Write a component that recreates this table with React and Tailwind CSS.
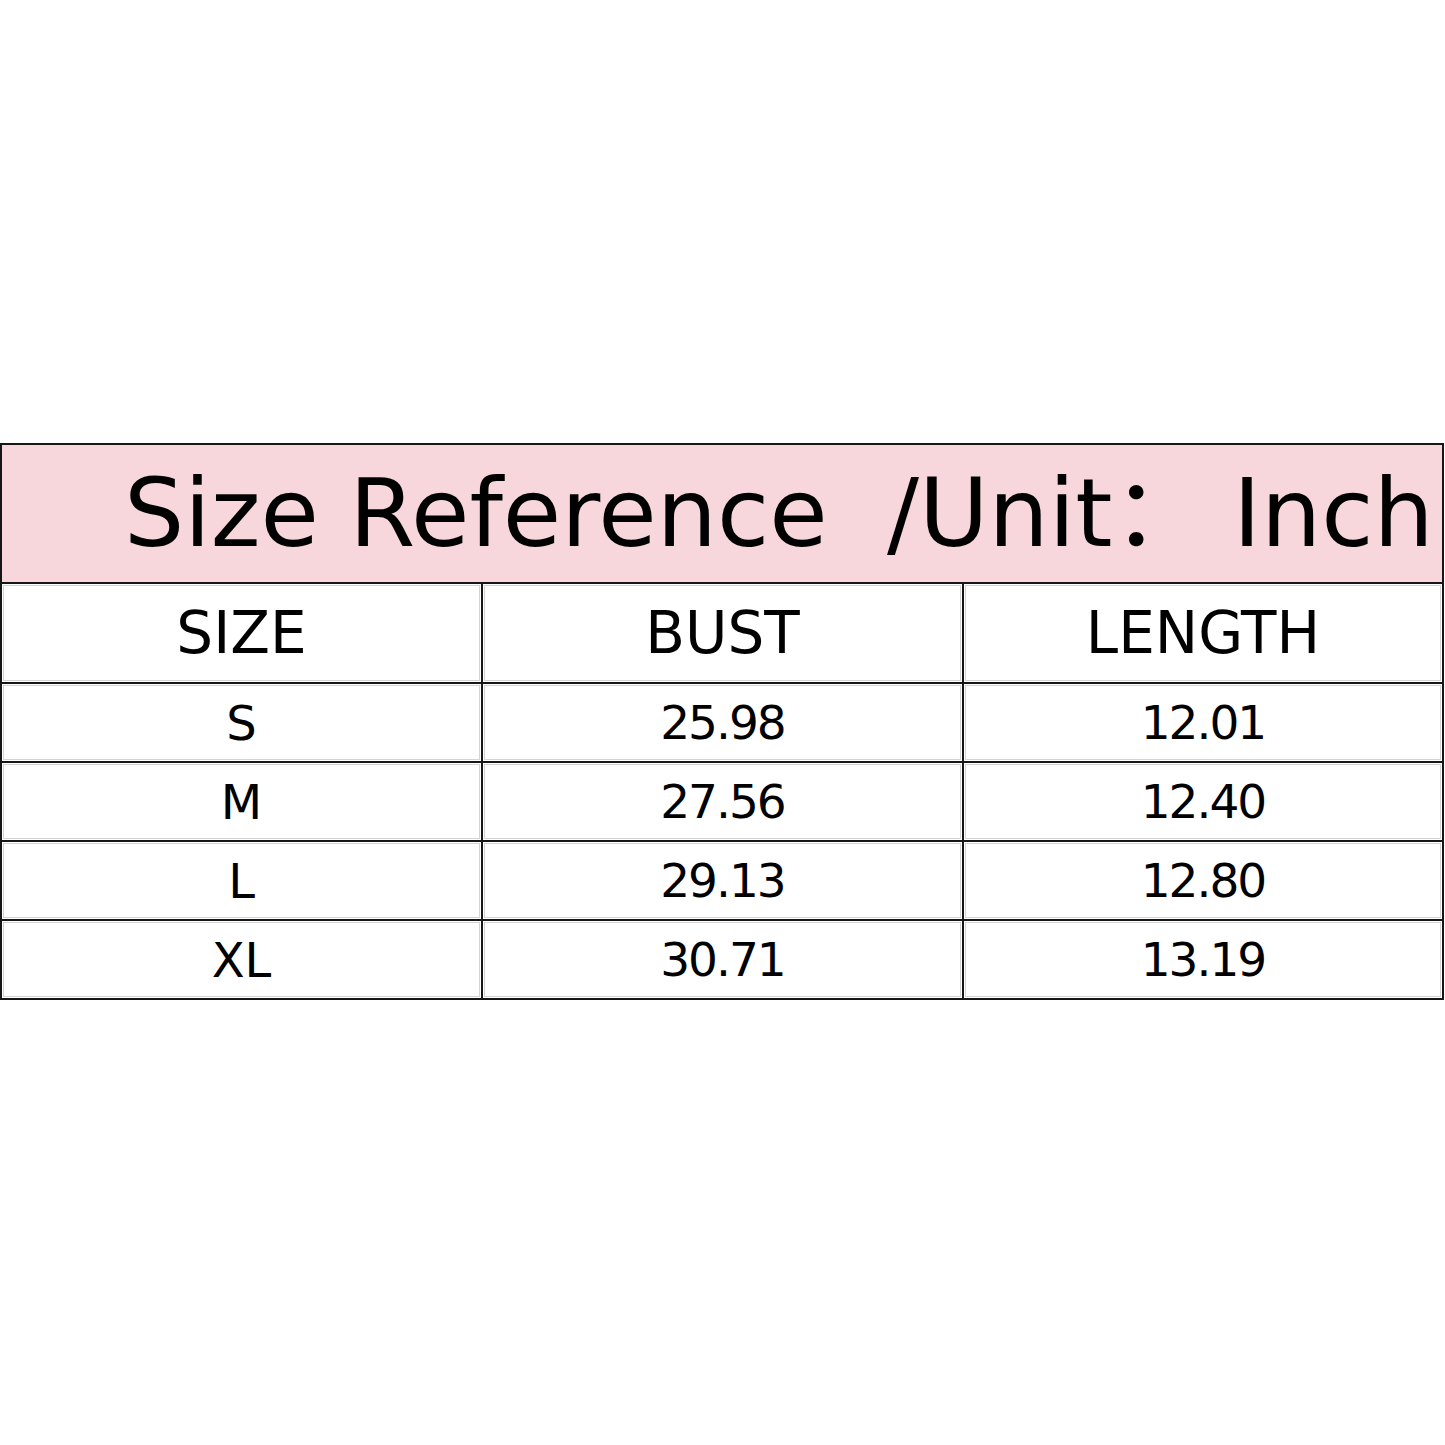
const rows = [
  ['S', '25.98', '12.01'],
  ['M', '27.56', '12.40'],
  ['L', '29.13', '12.80'],
  ['XL', '30.71', '13.19'],
];

const font = { fontFamily: '"DejaVu Sans", "Noto Sans CJK SC", sans-serif' };

function Cell({ children, last, size }) {
  return (
    <div className={`flex items-stretch ${last ? '' : 'border-r-2 border-[#161616]'}`}>
      <div className="flex-1 flex items-center justify-center border border-[#d4d4d4] m-px">
        <span className={size}>{children}</span>
      </div>
    </div>
  );
}

export default function App() {
  return (
    <div className="w-[1445px] h-[1445px] bg-white pt-[443px] text-black" style={font}>
      <div className="w-[1444px] border-2 border-[#161616]">
        <div className="h-[139px] bg-[#f8d7dc] border-b-2 border-[#161616] flex items-center pl-[122px] overflow-hidden whitespace-nowrap">
          <span className="w-[763px] shrink-0 text-[95px] leading-none">Size Reference</span>
          <span className="w-[346px] shrink-0 text-[95px] leading-none">/Unit：</span>
          <span className="shrink-0 text-[95px] leading-none">Inch</span>
        </div>
        <div className="grid grid-cols-[481px_481px_1fr] h-[100px] border-b-2 border-[#161616]">
          <Cell size="text-[58px] leading-none">SIZE</Cell>
          <Cell size="text-[58px] leading-none">BUST</Cell>
          <Cell size="text-[58px] leading-none" last>LENGTH</Cell>
        </div>
        {rows.map((r, i) => (
          <div
            key={r[0]}
            className={`grid grid-cols-[481px_481px_1fr] ${i < rows.length - 1 ? 'h-[79px] border-b-2 border-[#161616]' : 'h-[77px]'}`}
          >
            <Cell size="text-[48px] leading-none">{r[0]}</Cell>
            <Cell size="text-[47px] leading-none tracking-[-2px]">{r[1]}</Cell>
            <Cell size="text-[47px] leading-none tracking-[-2px]" last>{r[2]}</Cell>
          </div>
        ))}
      </div>
    </div>
  );
}
